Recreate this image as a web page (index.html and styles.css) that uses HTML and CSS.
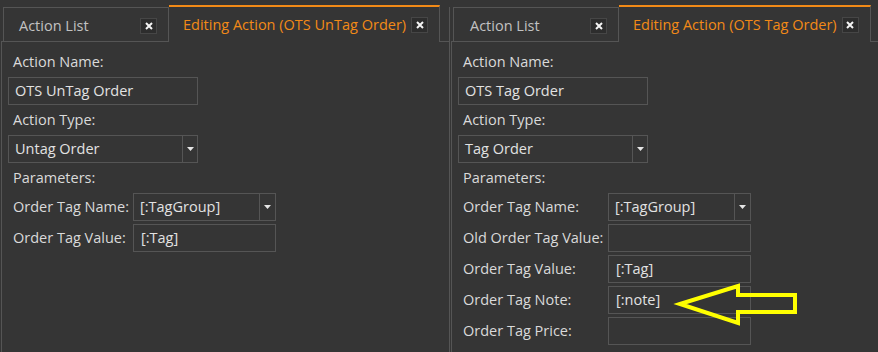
FILE: index.html
```html
<!DOCTYPE html>
<html lang="en">
<head>
<meta charset="utf-8">
<title>Editing Action</title>
<link rel="stylesheet" href="styles.css">
</head>
<body>
<div class="app">
  <section class="pane">
    <div class="tabstrip">
      <div class="tab">
        <span class="tab-title">Action List</span>
        <span class="close"><svg width="8" height="8" viewBox="0 0 8 8"><path d="M1 1L7 7M7 1L1 7"/></svg></span>
      </div>
      <div class="tab active">
        <span class="tab-title">Editing Action (OTS UnTag Order)</span>
        <span class="close"><svg width="8" height="8" viewBox="0 0 8 8"><path d="M1 1L7 7M7 1L1 7"/></svg></span>
      </div>
      <div class="tab-fill"></div>
    </div>
    <div class="content">
      <div class="label">Action Name:</div>
      <div class="textbox">OTS UnTag Order</div>
      <div class="label">Action Type:</div>
      <div class="combo">
        <span class="combo-value">Untag Order</span>
        <span class="combo-btn"><svg width="7" height="4" viewBox="0 0 7 4"><path d="M0 0H7L3.5 4Z"/></svg></span>
      </div>
      <div class="label">Parameters:</div>
      <div class="params">
        <div class="param-label">Order Tag Name:</div>
        <div class="combo small">
          <span class="combo-value">[:TagGroup]</span>
          <span class="combo-btn"><svg width="7" height="4" viewBox="0 0 7 4"><path d="M0 0H7L3.5 4Z"/></svg></span>
        </div>
        <div class="param-label">Order Tag Value:</div>
        <div class="textbox small">[:Tag]</div>
      </div>
    </div>
  </section>

  <section class="pane pane-right">
    <div class="tabstrip">
      <div class="tab">
        <span class="tab-title">Action List</span>
        <span class="close"><svg width="8" height="8" viewBox="0 0 8 8"><path d="M1 1L7 7M7 1L1 7"/></svg></span>
      </div>
      <div class="tab active">
        <span class="tab-title">Editing Action (OTS Tag Order)</span>
        <span class="close"><svg width="8" height="8" viewBox="0 0 8 8"><path d="M1 1L7 7M7 1L1 7"/></svg></span>
      </div>
      <div class="tab-fill"></div>
    </div>
    <div class="content">
      <div class="label">Action Name:</div>
      <div class="textbox">OTS Tag Order</div>
      <div class="label">Action Type:</div>
      <div class="combo">
        <span class="combo-value">Tag Order</span>
        <span class="combo-btn"><svg width="7" height="4" viewBox="0 0 7 4"><path d="M0 0H7L3.5 4Z"/></svg></span>
      </div>
      <div class="label">Parameters:</div>
      <div class="params wide">
        <div class="param-label">Order Tag Name:</div>
        <div class="combo small">
          <span class="combo-value">[:TagGroup]</span>
          <span class="combo-btn"><svg width="7" height="4" viewBox="0 0 7 4"><path d="M0 0H7L3.5 4Z"/></svg></span>
        </div>
        <div class="param-label">Old Order Tag Value:</div>
        <div class="textbox small"></div>
        <div class="param-label">Order Tag Value:</div>
        <div class="textbox small">[:Tag]</div>
        <div class="param-label">Order Tag Note:</div>
        <div class="textbox small">[:note]</div>
        <div class="param-label">Order Tag Price:</div>
        <div class="textbox small"></div>
      </div>
    </div>
  </section>

  <svg class="callout" width="140" height="54" viewBox="0 0 140 54">
    <polygon points="10,26 68,8 68,17 125,17 125,34 68,34 68,45"/>
  </svg>
</div>
</body>
</html>
```

FILE: styles.css
```css
* {
  box-sizing: border-box;
}

html,
body {
  margin: 0;
  height: 100%;
  background: #353535;
  overflow: hidden;
}

body {
  font-family: "Open Sans", "Segoe UI", sans-serif;
  font-size: 14.5px;
  color: #d8d8d8;
}

.app {
  position: relative;
  display: flex;
  width: 878px;
  height: 352px;
  overflow: hidden;
}

.pane {
  flex: none;
  width: 450px;
  display: flex;
  flex-direction: column;
}

.pane-right {
  width: 470px;
}

/* ---------- tabs ---------- */
.tabstrip {
  display: flex;
  align-items: flex-end;
  height: 42px;
  margin-left: 1px;
  padding-left: 2px;
  border-bottom: 1px solid #555;
}

.tab {
  flex: none;
  display: flex;
  align-items: center;
  justify-content: space-between;
  width: 166px;
  height: 34px;
  padding: 2px 11px 0 15px;
  border: 1px solid #555;
  border-bottom: none;
  color: #c2c2c2;
  white-space: nowrap;
}

.pane-right .tab {
  padding-left: 16px;
}

.tab.active {
  width: auto;
  height: 37px;
  margin-bottom: -1px;
  padding: 0 11px 0 14px;
  gap: 5px;
  border: none;
  border-top: 2px solid #f28a17;
  border-right: 1px solid #555;
  background: #353535;
  color: #f28a17;
}

.tab-fill {
  flex: 1;
  height: 34px;
  border-right: 1px solid #555;
}

.close {
  flex: none;
  display: flex;
  align-items: center;
  justify-content: center;
  width: 17px;
  height: 16px;
  border: 1px solid #464646;
  background: #2d2d2d;
}

.close svg {
  stroke: #f4f4f4;
  stroke-width: 2;
  fill: none;
}

/* ---------- form content ---------- */
.content {
  flex: 1;
  margin-left: 1px;
  padding: 5px 6px 0;
  border-left: 1px solid #555;
  border-right: 1px solid #555;
}

.label {
  height: 30px;
  line-height: 30px;
  padding-left: 5px;
  color: #dadada;
}

.textbox,
.combo {
  width: 190px;
  height: 28px;
  border: 1px solid #555;
  line-height: 26px;
  color: #e2e2e2;
  white-space: nowrap;
}

.textbox {
  padding-left: 6px;
}

.combo {
  display: flex;
}

.combo-value {
  flex: 1;
  padding-left: 6px;
}

.combo-btn {
  flex: none;
  width: 15px;
  display: flex;
  align-items: center;
  justify-content: center;
  border-left: 1px solid #555;
}

.combo-btn svg {
  fill: #e6e6e6;
}

.params {
  display: grid;
  grid-template-columns: 125px 143px;
  row-gap: 3px;
}

.params.wide {
  grid-template-columns: 150px 143px;
}

.param-label {
  height: 28px;
  line-height: 28px;
  padding-left: 5px;
  white-space: nowrap;
  color: #dadada;
}

.textbox.small,
.combo.small {
  width: 143px;
}

.textbox.small {
  padding-left: 7px;
}

.combo.small .combo-btn {
  width: 16px;
}

/* ---------- annotation arrow (overlay) ---------- */
.callout {
  position: absolute;
  left: 670px;
  top: 278px;
}

.callout polygon {
  fill: none;
  stroke: #ffff00;
  stroke-width: 4;
  stroke-linejoin: miter;
}
```
